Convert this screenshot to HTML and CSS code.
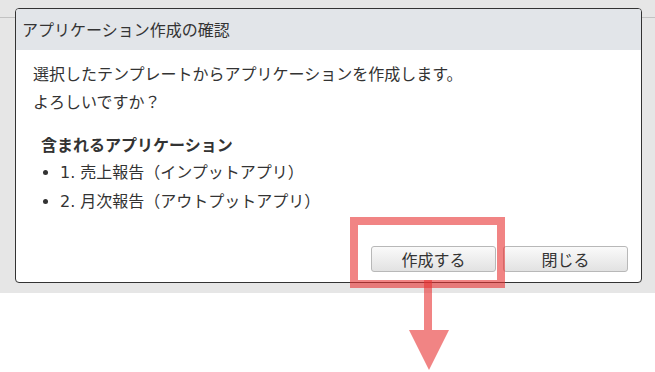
FILE: index.html
```html
<!DOCTYPE html>
<html lang="ja">
<head>
    <meta charset="UTF-8">
    <meta name="viewport" content="width=device-width, initial-scale=1.0">
    <title>アプリケーション作成の確認</title>
    <link rel="stylesheet" href="styles.css">
</head>
<body>
    <div class="screen">
        <div class="dialog">
            <div class="dialog-header">アプリケーション作成の確認</div>
            <div class="dialog-body">
                <p>選択したテンプレートからアプリケーションを作成します。</p>
                <p>よろしいですか？</p>
                <div class="apps">
                    <h3>含まれるアプリケーション</h3>
                    <ul>
                        <li>1. 売上報告（インプットアプリ）</li>
                        <li>2. 月次報告（アウトプットアプリ）</li>
                    </ul>
                </div>
            </div>
            <div class="dialog-footer">
                <button type="button">作成する</button>
                <button type="button">閉じる</button>
            </div>
        </div>
    </div>

    <!-- callout drawn over the page -->
    <svg class="annotation" width="655" height="372" viewBox="0 0 655 372">
        <rect x="354" y="221" width="147" height="63" fill="none" stroke="rgba(232,50,50,0.6)" stroke-width="8"/>
        <rect x="424" y="280" width="8" height="50" fill="rgba(232,50,50,0.6)"/>
        <polygon points="409,330 449,330 429,370" fill="rgba(232,50,50,0.6)"/>
    </svg>
</body>
</html>
```

FILE: styles.css
```css
* {
    margin: 0;
    padding: 0;
    box-sizing: border-box;
}

body {
    font-family: "Noto Sans CJK JP", "Noto Sans", sans-serif;
    color: #333;
    background: white;
    position: relative;
    width: 655px;
    height: 372px;
    overflow: hidden;
}

.screen {
    height: 293px;
    padding: 8px 13px 0 15px;
    background: linear-gradient(to bottom, #e6e6e6 17px, #c2c2c2 17px, #c2c2c2 18px, #e6e6e6 18px);
}

.dialog {
    height: 275px;
    display: flex;
    flex-direction: column;
    background: white;
    border: 1px solid #333;
    border-radius: 4px;
    overflow: hidden;
}

.dialog-header {
    height: 41px;
    line-height: 41px;
    padding-left: 6px;
    font-size: 16px;
    background: #e2e5e9;
}

.dialog-body {
    padding: 9px 0 0 17px;
    font-size: 16px;
}

.dialog-body p {
    line-height: 28px;
}

.apps {
    margin-top: 15px;
    padding-left: 8px;
}

.apps h3 {
    font-size: 16px;
    font-weight: bold;
    line-height: 28px;
}

.apps ul {
    padding-left: 19px;
}

.apps li {
    font-family: "DejaVu Sans", "Noto Sans CJK JP", sans-serif;
    line-height: 29px;
}

.dialog-footer {
    margin-top: auto;
    display: flex;
    justify-content: flex-end;
    gap: 7px;
    padding: 0 13px 10px 0;
}

button {
    width: 125px;
    height: 26px;
    font-family: inherit;
    font-size: 16px;
    color: #333;
    background: linear-gradient(to bottom, #fafafa, #e2e2e2);
    border: 1px solid #b8b8b8;
    border-radius: 3px;
    cursor: pointer;
}

.annotation {
    position: absolute;
    left: 0;
    top: 0;
    pointer-events: none;
}
```
